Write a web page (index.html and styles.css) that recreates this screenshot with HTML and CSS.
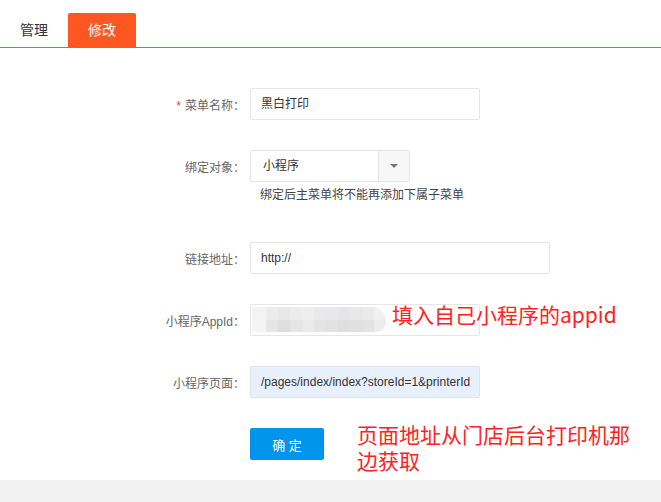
FILE: index.html
```html
<!DOCTYPE html>
<html lang="zh-CN">
<head>
<meta charset="utf-8">
<title>修改菜单</title>
<link rel="stylesheet" href="styles.css">
</head>
<body>
<div class="page">
  <div class="tabs">
    <div class="tab">管理</div>
    <div class="tab active">修改</div>
  </div>
  <form class="form">
    <div class="row">
      <label class="label"><span class="req">*</span>菜单名称：</label>
      <div class="input w230">黑白打印</div>
    </div>
    <div class="row tight">
      <label class="label">绑定对象：</label>
      <div class="select">
        <div class="select-text">小程序</div>
        <div class="select-btn"><span class="caret"></span></div>
      </div>
    </div>
    <div class="help">绑定后主菜单将不能再添加下属子菜单</div>
    <div class="row">
      <label class="label">链接地址：</label>
      <div class="input w300">http://</div>
    </div>
    <div class="row">
      <label class="label">小程序AppId：</label>
      <div class="input w230 appid">
        <div class="mosaic">
          <div class="mrow">
            <i style="background:#f3f3f3"></i><i style="background:#ececec"></i><i style="background:#e8e8e8"></i><i style="background:#ececec"></i><i style="background:#eeeeee"></i><i style="background:#e9e9e9"></i><i style="background:#e8e8ea"></i><i style="background:#e6e6e8"></i><i style="background:#e8e8e8"></i><i style="background:#eaeaea"></i><i style="background:#f1f1f1"></i>
          </div>
          <div class="mrow">
            <i style="background:#f4f4f4"></i><i style="background:#e6e6e8"></i><i style="background:#dedede"></i><i style="background:#e6e6e6"></i><i style="background:#eaeaea"></i><i style="background:#e4e4e6"></i><i style="background:#e2e2e4"></i><i style="background:#dedee0"></i><i style="background:#e0e0e0"></i><i style="background:#e2e2e2"></i><i style="background:#ececec"></i>
          </div>
        </div>
      </div>
    </div>
    <div class="row">
      <label class="label">小程序页面：</label>
      <div class="input w230 filled">/pages/index/index?storeId=1&amp;printerId</div>
    </div>
    <div class="row">
      <span class="label"></span>
      <button type="button" class="btn">确 定</button>
    </div>
  </form>
  <div class="note note1">填入自己小程序的appid</div>
  <div class="note note2">页面地址从门店后台打印机那<br>边获取</div>
</div>
</body>
</html>
```
FILE: styles.css
```css
html, body {
  margin: 0;
  padding: 0;
}
body {
  background: #f2f2f2;
  font-family: "Liberation Sans", "Noto Sans CJK SC", sans-serif;
  color: #333;
}
.page {
  position: relative;
  background: #fff;
  height: 480px;
}
.tabs {
  display: flex;
  align-items: flex-end;
  height: 47px;
  border-bottom: 1px solid #ff5722;
}
.tab {
  padding: 0 20px;
  height: 34px;
  line-height: 34px;
  font-size: 14px;
  color: #333;
}
.tab.active {
  background: #ff5722;
  color: #fff;
  border-radius: 2px 2px 0 0;
}
.form {
  margin: 40px 0 0;
}
.row {
  display: flex;
  align-items: center;
  height: 32px;
  margin-bottom: 30px;
}
.row.tight {
  margin-bottom: 0;
}
.label {
  width: 245px;
  margin-right: 5px;
  text-align: right;
  font-size: 12px;
  color: #666;
  flex-shrink: 0;
}
.req {
  color: #ff3b3b;
  margin-right: 4px;
}
.input {
  box-sizing: border-box;
  height: 32px;
  line-height: 30px;
  border: 1px solid #e6e6e6;
  border-radius: 2px;
  padding: 0 10px;
  font-size: 12px;
  color: #333;
  white-space: nowrap;
  overflow: hidden;
}
.w230 { width: 230px; }
.w300 { width: 300px; }
.filled {
  background: #e8f0fe;
  border-color: #dfe3ea;
}
.appid {
  padding: 0;
  position: relative;
}
.mosaic {
  position: absolute;
  left: 1px;
  top: 2px;
  width: 134px;
  filter: blur(0.6px);
  border-radius: 3px 14px 10px 3px;
  overflow: hidden;
}
.mrow {
  display: flex;
}
.mrow i {
  display: block;
  width: 12px;
  height: 12.5px;
}
.mrow i:first-child {
  width: 14px;
}
.select {
  box-sizing: border-box;
  display: flex;
  width: 160px;
  height: 32px;
  border: 1px solid #e6e6e6;
  border-radius: 2px;
  font-size: 12px;
}
.select-text {
  flex: 1;
  line-height: 30px;
  padding-left: 12px;
  color: #333;
}
.select-btn {
  width: 30px;
  border-left: 1px solid #e6e6e6;
  background: #f7f7f7;
  display: flex;
  align-items: center;
  justify-content: center;
}
.caret {
  width: 0;
  height: 0;
  border-left: 4px solid transparent;
  border-right: 4px solid transparent;
  border-top: 4px solid #777;
}
.help {
  padding-left: 260px;
  margin: 3px 0 37px;
  line-height: 20px;
  font-size: 12px;
  color: #444;
}
.btn {
  width: 74px;
  height: 32px;
  border: 0;
  border-radius: 2px;
  background: #0095ec;
  color: #fff;
  font-family: "Liberation Sans", "Noto Sans CJK SC", sans-serif;
  font-size: 13px;
  padding: 0;
}
.note {
  position: absolute;
  color: #ff2222;
  font-family: "Noto Sans CJK SC", sans-serif;
}
.note1 {
  left: 392px;
  top: 298px;
  font-size: 21px;
  line-height: 32px;
}
.note2 {
  left: 357px;
  top: 421px;
  font-size: 21px;
  line-height: 26px;
}
```
